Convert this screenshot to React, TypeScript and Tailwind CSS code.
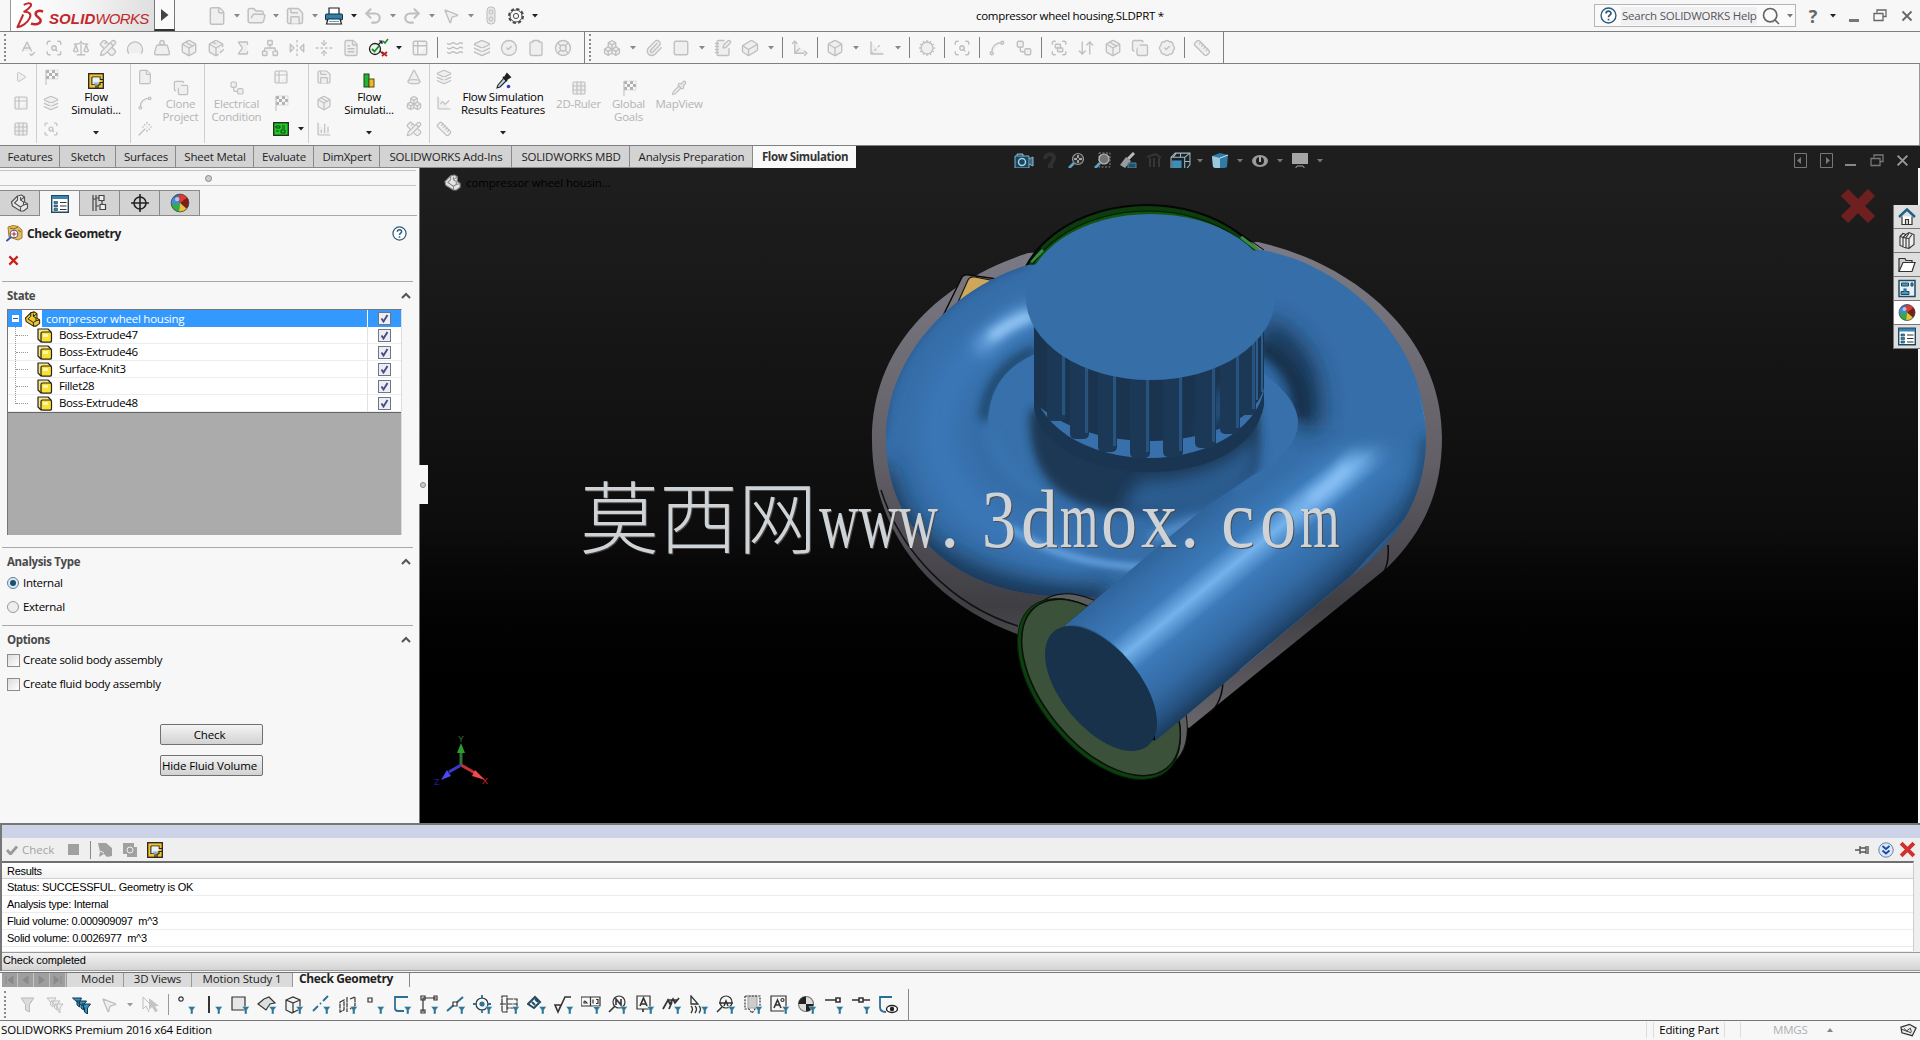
import React from 'react';
import clsx from 'clsx';
import {
  ArrowDownUp, Axis3d, BadgeCheck, Box, Boxes, ChartColumn, ChartLine, CircleCheck, Clipboard, Cog, Cone, Copy,
  Cuboid, FileText, FlipHorizontal2, FolderOpen, Gauge, Grid2x2, Grid3x3, Group, Layers, Move3d, Network,
  NotebookPen, Package, PackageCheck, Paperclip, PencilRuler, Pipette, Play, Redo2, Ruler, Save, Scale, ScanSearch,
  Sigma, Spline, SpellCheck, Table2, Undo2, Wand, Waves, Weight, Workflow, FoldVertical, File, MousePointer2,
  LifeBuoy, Search,
} from 'lucide-react';

type IconType = React.ComponentType<{ className?: string; strokeWidth?: number }>;
type ToolItem = IconType | 'caret' | 'sep' | 'check';

const UI = "font-['Open_Sans',sans-serif]";

function Caret({ className = 'text-[#555]' }: { className?: string }) {
  return (
    <svg viewBox="0 0 6 4" className={clsx('w-[6px] h-[4px] shrink-0', className)}>
      <path d="M0 0h6L3 3.6z" fill="currentColor" />
    </svg>
  );
}

function Grey({ icon: Icon, className = 'w-[18px] h-[18px]' }: { icon: IconType; className?: string }) {
  return <Icon className={clsx('shrink-0 text-[#c0c0c0] fill-[#efefef]', className)} strokeWidth={1.8} />;
}

function CheckerFlag() {
  return (
    <svg viewBox="0 0 16 16" className="w-4 h-4 shrink-0">
      <path d="M3 1v15" stroke="#bbb" />
      <path d="M3 1h3v3H3zM9 1h3v3H9zM6 4h3v3H6zM12 4h3v3h-3zM3 7h3v3H3zM9 7h3v3H9z" fill="#b0b0b0" />
      <path d="M3 1h12v9H3z" fill="none" stroke="#cfcfcf" strokeWidth=".6" />
    </svg>
  );
}

function Grip() {
  return <div className="w-[3px] h-[27px] border-l-2 border-dotted border-[#8a8a8a] shrink-0" />;
}

function CheckEntity() {
  return (
    <svg viewBox="0 0 20 20" className="w-5 h-5 overflow-visible">
      <circle cx="7" cy="11" r="5.5" fill="#e8f5e9" stroke="#222" strokeWidth="1.3" />
      <path d="M4 11l2.500 2.500L11 8" fill="none" stroke="#1c8a2b" strokeWidth="1.800" />
      <path d="M10 7l4-4M11 3h3v3M12 13l3 3" fill="none" stroke="#222" strokeWidth="1.200" />
      <path d="M15 3l2 2 3-4" fill="none" stroke="#1c8a2b" strokeWidth="1.600" />
      <path d="M14 14l5 4M19 14l-5 4" stroke="#c81e1e" strokeWidth="1.800" />
    </svg>
  );
}

const evaluateTools: ToolItem[] = [
  SpellCheck, ScanSearch, Scale, PencilRuler, Gauge, Weight, Package, PackageCheck, Sigma, Network,
  FlipHorizontal2, FoldVertical, FileText, 'check', 'caret', Table2, 'sep', Waves, Layers, CircleCheck, Clipboard, LifeBuoy,
];

const assemblyTools: ToolItem[] = [
  Boxes, 'caret', Paperclip, Grid2x2, 'caret', NotebookPen, Cuboid, 'caret', 'sep', Move3d, 'sep', Box, 'caret',
  Axis3d, 'caret', 'sep', Cog, 'sep', ScanSearch, 'sep', Spline, Workflow, 'sep', Group, ArrowDownUp, Package,
  Copy, BadgeCheck, 'sep', Ruler,
];

function ToolStrip({ items }: { items: ToolItem[] }) {
  return (
    <>
      {items.map((it, i) => {
        if (it === 'sep') return <div key={i} className="w-2 flex justify-center"><div className="w-px h-[21px] bg-[#808080]" /></div>;
        if (it === 'caret') return <div key={i} className="w-[15px] flex justify-center"><Caret className={items[i - 1] === 'check' ? 'text-[#222]' : 'text-[#888]'} /></div>;
        return (
          <div key={i} className="w-[27px] flex justify-center items-center">
            {it === 'check' ? <CheckEntity /> : <Grey icon={it} />}
          </div>
        );
      })}
    </>
  );
}

function TitleBar() {
  const quick: React.ReactNode[] = [
    <Grey icon={File} className="w-[20px] h-[20px]" />,
    <Grey icon={FolderOpen} className="w-[21px] h-[20px]" />,
    <Grey icon={Save} className="w-[20px] h-[20px]" />,
    <svg viewBox="0 0 20 20" className="w-5 h-5">
      <path d="M5 8V2h10v6" fill="#fff" stroke="#222" strokeWidth="1.200" />
      <rect x="1.500" y="8" width="17" height="6" rx="1" fill="#2f80ab" stroke="#14303f" />
      <path d="M4 13h12l1.500 5h-15z" fill="#fff" stroke="#222" strokeWidth="1.200" />
      <path d="M5 15.500h10" stroke="#5aa7c9" />
    </svg>,
    <Undo2 className="w-5 h-5 text-[#c0c0c0]" strokeWidth={2.6} />,
    <Redo2 className="w-5 h-5 text-[#c0c0c0]" strokeWidth={2.6} />,
    <Grey icon={MousePointer2} className="w-[18px] h-[18px]" />,
  ];
  return (
    <div className="h-[31px] flex items-center bg-[#f7f7f7] shrink-0">
      <div className="ml-[10px] w-[144px] h-[31px] border-l border-[#999] bg-linear-to-r from-white via-[#f4f4f4] to-[#dfdfdf] flex items-center">
        <svg viewBox="0 0 30 30" className="ml-[5px] w-[29px] h-[30px] shrink-0">
          <path d="M8 3.500C14 .5 17 2 15 5C13.500 7.500 11.500 8.500 8.500 10.500C13.500 10.500 16.500 12.500 14 17.500C11.500 22.500 6 26 1.500 26.500L7.500 13.500" fill="none" stroke="#c3272b" strokeWidth="2.100" strokeLinejoin="round" />
          <path d="M28 10.500C23.500 8.500 19.500 10.500 20.500 13.500C21.500 16.500 26 17 25.500 20C25 23.500 20 24 15.500 23" fill="none" stroke="#c3272b" strokeWidth="2.600" />
        </svg>
        <div className="ml-[4px] mt-[6px] text-[15px] leading-none italic text-[#c3272b] font-['Liberation_Sans',sans-serif] whitespace-nowrap">
          <span className="font-bold tracking-[0.100px]">SOLID</span>
          <span className="tracking-[-0.700px]">WORKS</span>
        </div>
      </div>
      <div className="w-[21px] h-[31px] border-l border-r border-b-2 border-[#333] border-l-[#777] border-r-[#777] bg-[#fafafa] flex items-center justify-center">
        <svg viewBox="0 0 8 12" className="w-2 h-3"><path d="M0 0l7.500 6L0 12z" fill="#444" /></svg>
      </div>
      <div className="ml-[29px] flex items-center">
        {quick.map((q, i) => (
          <div key={i} className="w-[39px] flex items-center">
            <div className="w-[26px] flex justify-center">{q}</div>
            <div className="w-[13px] flex justify-center"><Caret className={i === 3 ? 'text-[#222]' : 'text-[#888]'} /></div>
          </div>
        ))}
        <svg viewBox="0 0 10 20" className="ml-[9px] w-[10px] h-5">
          <rect x="1" y="1" width="8" height="17" rx="3.500" fill="#e6e6e6" stroke="#bdbdbd" />
          <circle cx="5" cy="6" r="2" fill="none" stroke="#bdbdbd" />
          <circle cx="5" cy="13" r="2" fill="none" stroke="#bdbdbd" />
        </svg>
        <svg viewBox="0 0 18 18" className="ml-[11px] w-[18px] h-[18px]">
          <circle cx="9" cy="9" r="7" fill="none" stroke="#4a4a4a" strokeWidth="2" strokeDasharray="3.300 2.200" />
          <circle cx="9" cy="9" r="6" fill="#f7f7f7" stroke="#4a4a4a" strokeWidth="1" />
          <circle cx="9" cy="9" r="2.600" fill="none" stroke="#4a4a4a" strokeWidth="1" />
        </svg>
        <div className="ml-[7px]"><Caret className="text-[#222]" /></div>
      </div>
      <div className="ml-[438px] w-[187px] text-[11.500px] tracking-[-0.300px] text-black whitespace-nowrap">compressor wheel housing.SLDPRT *</div>
      <div className="ml-auto w-[202px] h-[23px] border border-[#b5b5b5] bg-[#fafafa] flex items-center">
        <QuestionMark className="ml-[5px] w-[17px] h-[17px]" />
        <div className="ml-[4px] px-px w-[136px] bg-[#f0f0f3] text-[11.500px] leading-[18px] tracking-[-0.250px] text-[#555] whitespace-nowrap">Search SOLIDWORKS Help</div>
        <Search className="ml-[4px] w-[20px] h-[20px] text-[#666]" strokeWidth={2} />
        <div className="ml-[6px]"><Caret className="text-[#777]" /></div>
      </div>
      <div className="ml-[12px] w-[10px] text-center text-[18px] leading-none font-bold text-[#666]">?</div>
      <div className="ml-[12px]"><Caret className="text-[#222]" /></div>
      <div className="ml-[13px] mt-[9px] w-[10px] h-[3px] bg-[#777]" />
      <Restore className="ml-[14px] w-[14px] h-[13px] text-[#666]" />
      <Cross className="ml-[14px] mr-[7px] w-[12px] h-[12px] text-[#666]" />
    </div>
  );
}

function QuestionMark({ className }: { className?: string }) {
  return (
    <svg viewBox="0 0 16 16" className={className}>
      <circle cx="8" cy="8" r="7" fill="#fff" stroke="#2b5b78" strokeWidth="1.300" />
      <path d="M5.700 6.200c0-3 4.600-3 4.600-.2 0 1.700-2.300 1.700-2.300 3.600M8 11v1.600" fill="none" stroke="#2b5b78" strokeWidth="1.600" />
    </svg>
  );
}

function Restore({ className }: { className?: string }) {
  return (
    <svg viewBox="0 0 14 13" className={className}>
      <path d="M4 3.500V1h9v6.500h-3M1 4.500h9v7H1z" fill="none" stroke="currentColor" strokeWidth="1.300" />
    </svg>
  );
}

function Cross({ className, width = 1.8 }: { className?: string; width?: number }) {
  return (
    <svg viewBox="0 0 12 12" className={className}>
      <path d="M1.500 1.500l9 9M10.500 1.500l-9 9" stroke="currentColor" strokeWidth={width} />
    </svg>
  );
}

function FlowCube({ className }: { className?: string }) {
  return (
    <svg viewBox="0 0 16 16" className={className}>
      <rect x=".7" y=".7" width="14.600" height="14.600" fill="#f2c230" stroke="#222" strokeWidth="1.300" />
      <path d="M4 4h8v2.500h3M4 4v7.500h4v4M12 12v-2.500h3M10 15v-3h2" fill="none" stroke="#222" strokeWidth="1.200" />
      <path d="M4.600 4.600h7v4.400h-2v2.200h-5z" fill="#e5f3ff" />
      <path d="M5.500 9.500h5L8 13z" fill="#74b5ea" />
    </svg>
  );
}

function IconColumn({ icons, className }: { icons: React.ReactNode[]; className: string }) {
  return (
    <div className={clsx('h-[81px] flex flex-col items-center shrink-0', className)}>
      {icons.map((ic, i) => (
        <div key={i} className="h-[26px] flex items-center justify-center">{ic}</div>
      ))}
    </div>
  );
}

function RibbonSep() {
  return <div className="w-px h-[79px] bg-[#cfcfcf] shrink-0" />;
}

interface BigButtonProps {
  icon: React.ReactNode;
  lines: string[];
  className: string;
  enabled?: boolean;
}

function BigButton({ icon, lines, className, enabled }: BigButtonProps) {
  return (
    <div className={clsx('flex flex-col items-center shrink-0 text-[11.500px] leading-[13px] tracking-[-0.250px] whitespace-nowrap', className, enabled ? 'pt-[7px] text-black' : 'pt-[14px] text-[#b4b4b4]')}>
      <div className="h-[19px] flex items-center">{icon}</div>
      {lines.map((l, i) => (
        <div key={i}>{l}</div>
      ))}
      {enabled && <div className="mt-[15px]"><Caret className="text-[#222]" /></div>}
    </div>
  );
}

function Ribbon() {
  const s = 'w-[16px] h-[16px]';
  return (
    <div className="h-[81px] flex bg-[#f7f7f7] shrink-0 border-r border-[#999]">
      <IconColumn className="ml-[6px] w-[30px]" icons={[<Grey icon={Play} className="w-3 h-3" />, <Grey icon={Table2} className={s} />, <Grey icon={Grid3x3} className={s} />]} />
      <RibbonSep />
      <IconColumn className="w-[27px]" icons={[<CheckerFlag />, <Grey icon={Layers} className={s} />, <Grey icon={ScanSearch} className={s} />]} />
      <BigButton className="w-[64px] mr-[2px]" enabled icon={<FlowCube className="w-4 h-4" />} lines={['Flow', 'Simulati...']} />
      <RibbonSep />
      <IconColumn className="w-[28px]" icons={[<Grey icon={File} className={s} />, <Grey icon={Spline} className={s} />, <Grey icon={Wand} className={s} />]} />
      <BigButton className="w-[43px] mr-[2px]" icon={<Grey icon={Copy} className={s} />} lines={['Clone', 'Project']} />
      <RibbonSep />
      <BigButton className="w-[63px]" icon={<Grey icon={Workflow} className={s} />} lines={['Electrical', 'Condition']} />
      <IconColumn
        className="w-[26px]"
        icons={[
          <Grey icon={Table2} className={s} />,
          <CheckerFlag />,
          <svg viewBox="0 0 16 14" className="w-4 h-[14px]">
            <rect x=".7" y=".7" width="14.600" height="12.600" fill="#25c52c" stroke="#1c2a14" strokeWidth="1.300" />
            <path d="M3 4h4v2H3zM9 4h3M9 6h3M3 9h3M8 8h4v3H8z" fill="none" stroke="#0b4a10" />
          </svg>,
        ]}
      />
      <div className="w-[14px] flex justify-center items-end pb-[14px]"><Caret className="text-[#222]" /></div>
      <RibbonSep />
      <IconColumn className="w-[30px]" icons={[<Grey icon={Save} className={s} />, <Grey icon={Package} className={s} />, <Grey icon={ChartColumn} className={s} />]} />
      <BigButton
        className="w-[60px]"
        enabled
        icon={
          <svg viewBox="0 0 12 16" className="w-3 h-4">
            <rect x="1" y="1" width="5" height="13" fill="#27b03a" stroke="#124a19" />
            <rect x="6" y="6" width="5" height="8" fill="#e8b928" stroke="#5d4a0c" />
          </svg>
        }
        lines={['Flow', 'Simulati...']}
      />
      <IconColumn className="w-[30px]" icons={[<Grey icon={Cone} className={s} />, <Grey icon={Boxes} className={s} />, <Grey icon={PencilRuler} className={s} />]} />
      <RibbonSep />
      <IconColumn className="w-[28px]" icons={[<Grey icon={Layers} className={s} />, <Grey icon={ChartLine} className={s} />, <Grey icon={Ruler} className={s} />]} />
      <BigButton
        className="w-[90px]"
        enabled
        icon={
          <svg viewBox="0 0 16 16" className="w-4 h-4 overflow-visible">
            <path d="M2 15l1-3 6-7 2.500 2.500L5 14z" fill="#b9d9ee" stroke="#222" strokeWidth="1.100" />
            <path d="M8 4l4 4M10 4l2-3 3 3-3 2z" fill="#222" stroke="#222" strokeWidth="1.800" />
            <circle cx="13.500" cy="13.500" r="1.800" fill="#2a3fd0" />
          </svg>
        }
        lines={['Flow Simulation', 'Results Features']}
      />
      <BigButton className="w-[61px]" icon={<Grey icon={Grid3x3} className={s} />} lines={['2D-Ruler']} />
      <BigButton className="w-[39px]" icon={<CheckerFlag />} lines={['Global', 'Goals']} />
      <BigButton className="w-[62px]" icon={<Grey icon={Pipette} className={s} />} lines={['MapView']} />
    </div>
  );
}

const ribbonTabs = [
  { label: 'Features', w: 'w-[60px]' },
  { label: 'Sketch', w: 'w-[56px]' },
  { label: 'Surfaces', w: 'w-[60px]' },
  { label: 'Sheet Metal', w: 'w-[78px]' },
  { label: 'Evaluate', w: 'w-[60px]' },
  { label: 'DimXpert', w: 'w-[66px]' },
  { label: 'SOLIDWORKS Add-Ins', w: 'w-[132px]' },
  { label: 'SOLIDWORKS MBD', w: 'w-[118px]' },
  { label: 'Analysis Preparation', w: 'w-[123px]' },
];

function HeadsUp() {
  const cell = 'w-[26px] flex justify-center items-center';
  const caret = 'w-[14px] flex justify-center items-center';
  return (
    <div className="ml-[155px] mt-[6px] h-[18px] flex">
      <div className={cell}>
        <svg viewBox="0 0 20 18" className="w-5 h-[18px]"><path d="M1 4h14v12H1z" fill="#1d4459" stroke="#7fb4cd" /><path d="M3 4V2h6v2M15 7l4-2v9l-4-2" fill="#3b6b82" stroke="#8fb9cc" /><circle cx="8" cy="10" r="3.500" fill="none" stroke="#9cd1ea" strokeWidth="1.500" /></svg>
      </div>
      <div className={cell}>
        <svg viewBox="0 0 16 18" className="w-4 h-[18px]"><path d="M3 7c0-6 9-6 9-1 0 3-4 4-3 8H6" fill="none" stroke="#303030" strokeWidth="4" /></svg>
      </div>
      <div className={cell}>
        <svg viewBox="0 0 18 18" className="w-[18px] h-[18px]"><circle cx="11" cy="7" r="5.500" fill="#2d3134" stroke="#9a9a9a" strokeWidth="1.200" /><path d="M11 3v8M7 7h8" stroke="#ccc" strokeWidth="1.400" strokeDasharray="3 2" /><path d="M7 11l-5 5" stroke="#5aa3c6" strokeWidth="2.600" /></svg>
      </div>
      <div className={cell}>
        <svg viewBox="0 0 18 18" className="w-[18px] h-[18px]"><rect x="6" y="1" width="11" height="14" fill="none" stroke="#888" strokeDasharray="2 1.500" /><circle cx="11" cy="7" r="5" fill="#737373" stroke="#bbb" strokeWidth="1.200" /><path d="M7 11l-5 5" stroke="#5aa3c6" strokeWidth="2.600" /></svg>
      </div>
      <div className={cell}>
        <svg viewBox="0 0 18 18" className="w-[18px] h-[18px]"><path d="M15 1L9 7" stroke="#bbb" strokeWidth="3" /><path d="M7 5l5 4-6 7-5-3z" fill="#9b9b9b" /><path d="M9 11h8v5H9z" fill="#245069" stroke="#4d87a5" /></svg>
      </div>
      <div className={cell}>
        <svg viewBox="0 0 18 18" className="w-[18px] h-[18px]"><path d="M2 5l9-3 5 4M5 6v9M9 6v9M14 6v9" fill="none" stroke="#363636" strokeWidth="2" /></svg>
      </div>
      <div className={cell}>
        <svg viewBox="0 0 20 18" className="w-[21px] h-[19px]"><path d="M1 5l4-4h14v11l-4 5H1z" fill="#14222b" stroke="#a9b6bd" /><path d="M1 5h13v12M14 5l5-4M10 1v4M14 9h5M6 1L3 5" fill="none" stroke="#a9b6bd" /><path d="M2 8h9v8H2z" fill="#3f8db5" /></svg>
      </div>
      <div className={caret}><Caret className="text-[#777]" /></div>
      <div className={cell}>
        <svg viewBox="0 0 18 18" className="w-[18px] h-[18px]"><path d="M1 4l8-3 8 2-1 12-7 3-7-3z" fill="#2f7ba3" /><path d="M1 4l8 2v12l-7-3z" fill="#9cc8de" /><path d="M9 6l8-3" stroke="#d3e7f1" /></svg>
      </div>
      <div className={caret}><Caret className="text-[#777]" /></div>
      <div className={cell}>
        <svg viewBox="0 0 18 16" className="w-[18px] h-4"><ellipse cx="9" cy="8" rx="8" ry="6" fill="#9b9b9b" /><circle cx="9" cy="8" r="4" fill="#1e1e1e" /><path d="M9 4v5" stroke="#ddd" strokeWidth="1.500" /></svg>
      </div>
      <div className={caret}><Caret className="text-[#777]" /></div>
      <div className={cell}>
        <svg viewBox="0 0 18 18" className="w-[18px] h-[18px]"><path d="M1 1h16v11H1z" fill="#a5a5a5" /><path d="M6 14h6l2 3H4z" fill="#1e1e1e" stroke="#a5a5a5" /></svg>
      </div>
      <div className={caret}><Caret className="text-[#777]" /></div>
    </div>
  );
}

function RibbonTabs() {
  return (
    <div className="h-[23px] flex shrink-0 border-t border-[#808080]">
      {ribbonTabs.map((t) => (
        <div key={t.label} className={clsx('h-[22px] shrink-0 bg-[#d3d3d3] border-r border-b border-[#8a8a8a] flex items-center justify-center pl-px text-[11.500px] tracking-[-0.200px] text-[#1e1e1e] whitespace-nowrap', t.w)}>
          {t.label}
        </div>
      ))}
      <div className="w-[103px] shrink-0 bg-[#f9f9f9] flex items-center justify-center pl-px text-[11.500px] font-bold tracking-[-0.400px] text-[#333] whitespace-nowrap">Flow Simulation</div>
      <div className="flex-1 bg-[#1e1e1e] flex">
        <HeadsUp />
        <div className="ml-auto mr-[11px] mt-[7px] h-[15px] flex items-center gap-[12px] text-[#777]">
          <svg viewBox="0 0 13 15" className="w-[13px] h-[15px] mr-px"><path d="M.5 .5h12v14H.5z" fill="none" stroke="currentColor" /><path d="M7 4v7L3 7.500z" fill="currentColor" /></svg>
          <svg viewBox="0 0 13 15" className="w-[13px] h-[15px]"><path d="M.5 .5h12v14H.5z" fill="none" stroke="currentColor" /><path d="M6 4v7l4-3.500z" fill="currentColor" /></svg>
          <div className="w-[11px] h-[2px] mt-[9px] bg-[#888]" />
          <Restore className="ml-[2px] w-[14px] h-[13px]" />
          <Cross className="w-[13px] h-[13px] text-[#999]" />
        </div>
      </div>
    </div>
  );
}

function Ball({ className }: { className?: string }) {
  return (
    <svg viewBox="0 0 18 18" className={className}>
      <circle cx="9" cy="9" r="8" fill="#3b8de0" />
      <path d="M9 9L3 3.500A8 8 0 0 1 9 1z" fill="#2f6fd0" />
      <path d="M9 9V1a8 8 0 0 1 6.500 4z" fill="#e23b2e" />
      <path d="M9 9L4 4.500 9 1z" fill="#e23b2e" opacity=".5" />
      <path d="M9 9l6.500-5A8 8 0 0 1 15 14z" fill="#7a2016" />
      <path d="M9 9l6 5.300A8 8 0 0 1 8 17z" fill="#e9c22f" />
      <path d="M9 9l-1 8A8 8 0 0 1 1.200 10z" fill="#37a84a" />
      <circle cx="9" cy="9" r="8" fill="none" stroke="#444" strokeWidth=".7" />
      <circle cx="6.500" cy="5.500" r="2" fill="#fff" opacity=".6" />
    </svg>
  );
}

function ListIcon({ className }: { className?: string }) {
  return (
    <svg viewBox="0 0 18 18" className={className}>
      <path d="M.7 .7h16.600v16.600H.7z" fill="#fff" stroke="#1f4a63" strokeWidth="1.400" />
      <path d="M1 1h16v3H1z" fill="#3b85ad" />
      <path d="M3 6.500h3.500v2H3zM3 10h3.500v2H3zM3 13.500h3.500v2H3z" fill="#3b85ad" stroke="#1f4a63" strokeWidth=".7" />
      <path d="M9 7.500h6.500M9 11h6.500M9 14.500h6.500" stroke="#333" strokeWidth="1.200" />
    </svg>
  );
}

function PartIcon({ className, fill = '#e9e9e9' }: { className?: string; fill?: string }) {
  return (
    <svg viewBox="0 0 18 18" className={className}>
      <path d="M1 8l6-6 4-1 3 2v5l3 2v4l-4 3h-3L2 12z" fill={fill} stroke="currentColor" strokeWidth="1.200" strokeLinejoin="round" />
      <path d="M7 2v4l-3 3 6 4 3-2v-3l-3-2V3M10 13v4M10 6l4-3M13 11l4-1" fill="none" stroke="currentColor" strokeWidth="1.100" />
    </svg>
  );
}

function BodyIcon() {
  return (
    <svg viewBox="0 0 16 15" className="w-4 h-[15px] shrink-0">
      <path d="M1 1h10l3 3v10H4l-3-3z" fill="#f6e88a" stroke="#222" strokeWidth="1.200" strokeLinejoin="round" />
      <rect x="4" y="4" width="10.500" height="10" rx="1.500" fill="#fbe232" stroke="#222" strokeWidth="1.200" />
      <path d="M6 6h5v3H6z" fill="#fff7a8" />
    </svg>
  );
}

function CheckedBox() {
  return (
    <div className="w-[13px] h-[13px] border border-[#6f7583] bg-[#eceef4] flex items-center justify-center shrink-0">
      <svg viewBox="0 0 9 9" className="w-[9px] h-[9px]"><path d="M1.500 4.500l2 3L7.500 1" fill="none" stroke="#474d86" strokeWidth="1.900" /></svg>
    </div>
  );
}

const bodies = ['Boss-Extrude47', 'Boss-Extrude46', 'Surface-Knit3', 'Fillet28', 'Boss-Extrude48'];

function SectionHead({ title, className }: { title: string; className?: string }) {
  return (
    <div className={clsx('ml-[2px] mr-[6px] border-t border-[#a8a8a8] pl-[5px] pr-[2px] flex items-center justify-between', className)}>
      <span className="text-[11.500px] font-bold tracking-[-0.350px] text-[#4a4a4a]">{title}</span>
      <svg viewBox="0 0 10 7" className="w-[10px] h-[7px]"><path d="M1 6l4-4 4 4" fill="none" stroke="#555" strokeWidth="2" /></svg>
    </div>
  );
}

function Choice({ label, radio, on }: { label: string; radio?: boolean; on?: boolean }) {
  return (
    <div className="h-6 pl-[7px] flex items-center text-[11.500px] text-black">
      {radio ? (
        <div className={clsx('w-3 h-3 rounded-full border flex items-center justify-center', on ? 'border-[#5d7f99] bg-[#dcebf5]' : 'border-[#999] bg-[#eee]')}>
          {on && <div className="w-[6px] h-[6px] rounded-full bg-[#1b506f]" />}
        </div>
      ) : (
        <div className="w-[13px] h-[13px] border border-[#8c8c8c] bg-linear-to-br from-[#dcdcdc] to-white" />
      )}
      <span className={clsx('tracking-[-0.280px]', radio ? 'ml-[4px]' : 'ml-[3px]')}>{label}</span>
    </div>
  );
}

function PropertyPanel() {
  const tab = 'w-10 h-[26px] border-t border-r border-b border-[#8a8a8a] flex items-center justify-center bg-[#d3d3d3]';
  return (
    <div className="w-[420px] shrink-0 bg-[#f7f7f7] border-r border-[#777] flex flex-col">
      <div className="mt-[2px] mr-[3px] h-[16px] border-t border-b border-[#c4c4c4] flex items-center justify-center">
        <div className="w-[7px] h-[7px] rounded-full border border-[#888] bg-[#ccc]" />
      </div>
      <div className="mt-[4px] flex">
        <div className={tab}><PartIcon className="w-[19px] h-[18px] text-[#555]" /></div>
        <div className="w-10 h-[26px] border-t border-r border-[#8a8a8a] flex items-center justify-center"><ListIcon className="w-[18px] h-[18px]" /></div>
        <div className={tab}>
          <svg viewBox="0 0 16 18" className="w-4 h-[18px]"><path d="M1 1v16M4 1v16M1 5h3M4 4h3M4 12h3M10 7v3" fill="none" stroke="#444" strokeWidth="1.200" /><path d="M7 1.500h5v5H7zM8 10.500h5.500v5H8z" fill="#eee" stroke="#444" strokeWidth="1.200" /></svg>
        </div>
        <div className={tab}>
          <svg viewBox="0 0 18 18" className="w-[18px] h-[18px]"><circle cx="9" cy="9" r="6" fill="none" stroke="#222" strokeWidth="1.600" /><path d="M9 0v18M0 9h18" stroke="#222" strokeWidth="1.600" /></svg>
        </div>
        <div className={tab}><Ball className="w-[20px] h-[20px]" /></div>
        <div className="w-[217px] border-b border-[#a8a8a8]" />
      </div>
      <div className="h-[35px] pl-[6px] pr-[12px] flex items-center">
        <svg viewBox="0 0 17 17" className="w-[17px] h-[17px]">
          <path d="M2 2l5-1.500 5 1L16 5v8l-4 2-9-3z" fill="#e3bd62" stroke="#a47a28" />
          <path d="M4 3l4 1 4-2M12 5l3 2" stroke="#8d6416" fill="none" />
          <circle cx="8" cy="9" r="3.800" fill="#fff" stroke="#5a5a8a" strokeWidth="1.100" />
          <path d="M8 6.500v5M5.500 9h5" stroke="#a8262c" />
          <path d="M5 12l-4.500 4" stroke="#3355aa" strokeWidth="1.800" />
        </svg>
        <span className="ml-[4px] text-[12px] font-bold tracking-[-0.350px] text-[#222]">Check Geometry</span>
        <QuestionMark className="ml-auto w-[15px] h-[15px]" />
      </div>
      <div className="h-[30px] pl-[8px] pt-[4px]"><Cross className="w-[11px] h-[11px] text-[#c8201c]" width={2.4} /></div>
      <SectionHead title="State" className="h-[28px]" />
      <div className="ml-[7px] w-[395px] h-[226px] bg-[#ababab] border-t border-l border-[#777] border-r border-r-[#ddd]">
        <div className="h-[17px] bg-[#3399ff] flex items-center text-[11.500px] text-white">
          <div className="ml-[4px] w-[7px] h-[7px] bg-white flex items-center justify-center"><div className="w-[5px] h-px bg-[#1b5faa]" /></div>
          <div className="ml-[3px] w-[20px] h-[17px] bg-white flex items-center justify-center"><PartIcon className="w-[17px] h-[16px] text-[#2c2200]" fill="#e8c93a" /></div>
          <span className="ml-[4px] tracking-[-0.250px]">compressor wheel housing</span>
          <div className="ml-auto w-[34px] h-[17px] border-l border-white flex items-center justify-center"><CheckedBox /></div>
        </div>
        <div className="relative">
          <div className="absolute left-[7px] top-0 w-px h-[77px] border-l border-dotted border-[#999]" />
          {bodies.map((b) => (
            <div key={b} className="h-[17px] bg-white border-b border-[#ededed] flex items-center text-[11.500px] tracking-[-0.380px] text-black">
              <div className="ml-[8px] w-[12px] border-t border-dotted border-[#999]" />
              <div className="ml-[9px] flex"><BodyIcon /></div>
              <span className="ml-[6px] leading-[16px]">{b}</span>
              <div className="ml-auto w-[34px] h-[17px] border-l border-[#e2e2e2] flex items-center justify-center"><CheckedBox /></div>
            </div>
          ))}
          <div className="h-px bg-[#666]" />
        </div>
      </div>
      <SectionHead title="Analysis Type" className="mt-[12px] h-[28px]" />
      <div className="-mt-[4px]">
        <Choice label="Internal" radio on />
        <Choice label="External" radio />
      </div>
      <SectionHead title="Options" className="mt-[6px] h-[28px]" />
      <div className="-mt-[5px]">
        <Choice label="Create solid body assembly" />
        <Choice label="Create fluid body assembly" />
      </div>
      <div className="mt-[28px] ml-[160px] w-[103px] flex flex-col gap-[10px]">
        {['Check', 'Hide Fluid Volume'].map((l) => (
          <button key={l} className="h-[21px] pr-[4px] rounded-[2px] border border-[#707070] bg-linear-to-b from-[#f4f4f4] to-[#d2d2d2] text-[11.500px] leading-[18px] tracking-[-0.150px] text-black whitespace-nowrap">{l}</button>
        ))}
      </div>
    </div>
  );
}

const TORUS =
  'M1028 265C960 285 886 350 886 440C886 520 945 590 1050 596C1075 598 1085 598 1097 597L1065 625C1100 630 1160 690 1155 740L1189 713L1350 577C1400 540 1426 495 1426 437C1426 340 1345 265 1262 250Z';
const PIPE = 'M1197 513L1063 627C1095 615 1158 670 1155 741L1350 577C1400 540 1426 495 1426 437C1426 400 1410 375 1400 360L1299 430C1290 452 1270 465 1250 477Z';

// x, width, bottom of each impeller blade
const blades = [
  [1047, 19, 421], [1070, 19, 439], [1098, 19, 452], [1130, 20, 458],
  [1163, 20, 457], [1195, 21, 448], [1220, 20, 434], [1239, 17, 415],
];

// glyphs with the matrix that narrows each of them to a 40px cell
const domain: [string, string][] = [
  ['www', 'matrix(0.67 0 0 1 819 547)'],
  ['.', 'matrix(0.95 0 0 1 940 547)'],
  ['3', 'matrix(0.83 0 0 1 982 547)'],
  ['d', 'matrix(0.9 0 0 1 1021 547)'],
  ['m', 'matrix(0.6 0 0 1 1060 547)'],
  ['o', 'matrix(0.88 0 0 1 1101 547)'],
  ['x', 'matrix(0.88 0 0 1 1141 547)'],
  ['.', 'matrix(0.95 0 0 1 1180 547)'],
  ['c', 'matrix(0.92 0 0 1 1221 547)'],
  ['o', 'matrix(0.88 0 0 1 1260 547)'],
  ['m', 'matrix(0.62 0 0 1 1300 547)'],
];

function Blur({ id, r }: { id: string; r: number }) {
  return (
    <filter id={id} filterUnits="userSpaceOnUse" x="800" y="180" width="720" height="640">
      <feGaussianBlur stdDeviation={r} />
    </filter>
  );
}

function Model() {
  return (
    <svg viewBox="420 168 1498 655" className="absolute inset-0 w-[1498px] h-[655px] overflow-visible">
      <defs>
        <clipPath id="torus"><path d={TORUS} /></clipPath>
        <clipPath id="pipe"><path d={PIPE} /></clipPath>
        <clipPath id="well"><path d="M960 300H1340V425H1299C1293 452 1272 465 1250 477L1197 513L1140 561H960Z" /></clipPath>
        <clipPath id="drum"><path d="M1034 300V395C1034 437 1084 472 1149 472C1214 472 1264 437 1264 395V300Z" /></clipPath>
        <clipPath id="flange"><path d="M1000 580H1085L1105 591L1065 625L1100 700L1154 741L1189 712V800H1000Z" /></clipPath>
        <Blur id="b3" r={3} />
        <Blur id="b5" r={5} />
        <Blur id="b8" r={8} />
        <Blur id="b12" r={12} />
        <linearGradient id="shell" x1="0" y1="242" x2="0" y2="728" gradientUnits="userSpaceOnUse">
          <stop offset="0" stopColor="#7c7a84" />
          <stop offset=".45" stopColor="#625f66" />
          <stop offset=".75" stopColor="#3f3e43" />
          <stop offset="1" stopColor="#69666c" />
        </linearGradient>
        <linearGradient id="tube" x1="1130" y1="568" x2="1224" y2="682" gradientUnits="userSpaceOnUse">
          <stop offset="0" stopColor="#2f639a" />
          <stop offset=".1" stopColor="#346ca6" />
          <stop offset=".3" stopColor="#3c7aba" />
          <stop offset=".43" stopColor="#74b2ec" />
          <stop offset=".56" stopColor="#3c7aba" />
          <stop offset=".78" stopColor="#3269a2" />
          <stop offset=".91" stopColor="#275383" />
          <stop offset="1" stopColor="#1c3e60" />
        </linearGradient>
      </defs>

      {/* housing shell */}
      <path d="M1028 253C940 282 872 345 872 440C872 530 930 602 1017 634L1189 728L1388 567C1425 530 1442 490 1442 437C1442 340 1360 265 1258 242Z" fill="url(#shell)" />
      <path d="M881 490C900 550 950 605 1018 626" fill="none" stroke="#111" strokeWidth="1.500" />
      <path d="M1388 545C1389 558 1388 566 1383 573M1223 682C1222 700 1216 710 1205 716" fill="none" stroke="#0a0a0a" strokeWidth="1.500" />
      <path d="M939 324L962 277Q964 274 969 275L997 279L965 310Z" fill="#77747a" stroke="#0a0a0a" strokeWidth="1.500" />
      <path d="M955 309L968 280Q970 276 975 277L995 281Z" fill="#cfa75a" stroke="#1a1a1a" strokeWidth="1.200" />

      {/* inlet ring behind the cap */}
      <ellipse cx="1147" cy="302" rx="130" ry="97" fill="#0c3d0e" stroke="#050505" strokeWidth="2" />
      <ellipse cx="1148" cy="303" rx="127" ry="92" fill="#11530f" stroke="#051a05" strokeWidth="1.200" />
      <path d="M1031 262L1043 250M1241 237L1258 250" stroke="#3a8a40" strokeWidth="3" />
      <path d="M1027 265L1041 248M1241 234L1264 250" stroke="#050505" strokeWidth="1" />

      {/* scroll volume */}
      <path d={TORUS} fill="#366ea9" />
      <g clipPath="url(#torus)">
        <path d="M872 470C886 548 950 606 1110 606" fill="none" stroke="#18334f" strokeWidth="40" filter="url(#b12)" />
        <path d="M1028 262C956 284 884 345 882 440" fill="none" stroke="#28558a" strokeWidth="8" filter="url(#b5)" />
        <path d="M1040 314C975 340 932 385 938 445C947 505 1010 546 1090 556" fill="none" stroke="#3a78ba" strokeWidth="30" filter="url(#b12)" />
        <path d="M978 350C995 332 1012 320 1034 312" fill="none" stroke="#74b0ea" strokeWidth="13" filter="url(#b8)" />
        <path d="M990 338C1005 326 1020 319 1034 315" fill="none" stroke="#9ccdf8" strokeWidth="9" filter="url(#b5)" />
        <path d="M1010 528C1050 555 1096 566 1145 567" fill="none" stroke="#6ba8e4" strokeWidth="6" filter="url(#b3)" />
        <path d="M1150 537C1170 532 1185 526 1196 516" fill="none" stroke="#6ba8e4" strokeWidth="6" filter="url(#b5)" />
        <path d="M1036 350C1000 365 986 390 984 420" fill="none" stroke="#1e4468" strokeWidth="10" filter="url(#b5)" />
      </g>

      {/* discharge pipe */}
      <g clipPath="url(#pipe)">
        <path d="M1302 425L1063 627L1155 741L1350 577L1440 480V340Z" fill="url(#tube)" />
        <path d="M1260 330H1450V440C1420 480 1395 465 1360 450C1330 440 1300 455 1275 475L1225 500Z" fill="#366ea9" filter="url(#b12)" />
        <path d="M1235 488L1290 445" stroke="#366ea9" strokeWidth="16" filter="url(#b5)" />
        <path d="M1290 517C1325 492 1342 478 1358 456" fill="none" stroke="#74b0ea" strokeWidth="13" filter="url(#b8)" />
        <path d="M1310 500C1325 490 1338 478 1348 466" fill="none" stroke="#8ec4f5" strokeWidth="8" filter="url(#b5)" />
        <path d="M1431 437C1429 500 1400 549 1354 586" fill="none" stroke="#1d4064" strokeWidth="16" filter="url(#b8)" />
      </g>
      <g clipPath="url(#torus)">
        <path d="M1262 330C1296 348 1312 375 1306 428" fill="none" stroke="#152f49" strokeWidth="26" filter="url(#b12)" />
        <path d="M1260 345C1290 362 1304 385 1302 418" fill="none" stroke="#17324d" strokeWidth="16" filter="url(#b5)" />
      </g>

      {/* ledge and hub */}
      <g clipPath="url(#well)">
        <path d="M1040 352C1005 365 988 390 988 425C992 445 1000 458 1020 470L1260 476C1285 460 1299 440 1298 420C1296 400 1280 386 1262 372Z" fill="#3770ab" />
        <path d="M990 430C996 455 1010 475 1040 492" fill="none" stroke="#3973b0" strokeWidth="12" filter="url(#b5)" />
        <path d="M1030 410C1026 470 1056 510 1126 512C1180 514 1235 492 1256 470C1262 440 1260 420 1256 400Z" fill="#1a3754" filter="url(#b5)" />
        <path d="M1140 480C1190 480 1234 464 1254 436C1266 466 1244 500 1204 512C1170 520 1140 518 1120 508Z" fill="#2b5c8f" filter="url(#b8)" />
      </g>

      {/* impeller drum */}
      <path d="M1034 390V408C1040 445 1090 472 1149 472C1208 472 1256 448 1264 405V390Z" fill="#1a3551" />
      <g clipPath="url(#drum)">
        <ellipse cx="1149" cy="380" rx="116" ry="78" fill="#3770ab" />
        <path d="M1034 300H1264V388C1256 420 1205 441 1149 441C1100 441 1058 425 1034 402Z" fill="#1a344f" />
        <path d="M1195 432C1215 426 1235 413 1240 400V374L1218 390Z" fill="#234d77" filter="url(#b5)" />
        {blades.map(([x, w, b]) => (
          <g key={x}>
            <rect x={x} y="340" width={w} height={b - 340} rx="5" fill="#1b3957" />
            <rect x={x + w - 4} y="340" width="3" height={b - 346} fill="#27547f" />
          </g>
        ))}
        <path d="M1257 340V400M1262 330V392" stroke="#2b5c8e" strokeWidth="2" />
      </g>
      <ellipse cx="1150.500" cy="297" rx="124.700" ry="83" fill="#366fa8" />

      {/* outlet flange */}
      <g clipPath="url(#flange)">
        <ellipse cx="1108" cy="682" rx="104" ry="57" transform="rotate(50.600 1108 682)" fill="#5d5d5d" stroke="#0a0a0a" />
        <ellipse cx="1099" cy="689" rx="106.500" ry="59" transform="rotate(50.600 1099 689)" fill="#0d400f" stroke="#082208" />
        <ellipse cx="1101" cy="687.500" rx="104" ry="57" transform="rotate(50.600 1101 687.500)" fill="#3c5139" stroke="#0a0f0a" strokeWidth="1.500" />
      </g>
      <path d="M1065 626C1085 618 1130 640 1148 680C1156 700 1160 725 1154 742L1189 713L1240 670L1120 580Z" fill="url(#tube)" />
      <ellipse cx="1101" cy="688.500" rx="74" ry="39.500" transform="rotate(50.600 1101 688.500)" fill="#19324c" />

      {/* triad */}
      <path d="M461 765V750" stroke="#2b7a2b" strokeWidth="3" />
      <path d="M457 753L461 743L465 753Z" fill="#2f9a2f" />
      <path d="M461 765L475 773" stroke="#c93030" strokeWidth="3" />
      <path d="M475 770L485 780L472 776Z" fill="#f04a4a" />
      <path d="M461 765L449 772" stroke="#3a3ad0" strokeWidth="3" />
      <path d="M451 776L441 780L447 770Z" fill="#4a4af5" />
      <g className="font-['Liberation_Sans',sans-serif] text-[9px]">
        <text x="458" y="742" fill="#2f7a2f">Y</text>
        <text x="482" y="784" fill="#d02525">X</text>
        <text x="434" y="785" fill="#1d1da0">Z</text>
      </g>

      {/* watermark */}
      <g fill="#cdd3d6" className="drop-shadow-[1.5px_1.5px_0px_rgba(80,72,68,0.95)]">
        <text x="580" y="548" className="font-['Noto_Sans_CJK_SC',sans-serif] font-light text-[79px]">莫西网</text>
        {domain.map(([ch, m]) => (
          <text key={m} transform={m} className="font-['Liberation_Serif',serif] text-[82px]">{ch}</text>
        ))}
      </g>
    </svg>
  );
}

function TaskPane() {
  const s = 'w-[18px] h-[19px]';
  const items = [
    <svg viewBox="0 0 18 18" className={s}><path d="M4 9v8h10V9M7.500 17v-5h3v5" fill="#fff" stroke="#333" strokeWidth="1.200" /><path d="M1 9.500L9 2l8 7.500" fill="none" stroke="#1f6186" strokeWidth="2.400" /></svg>,
    <svg viewBox="0 0 18 18" className={s}><path d="M2 5l3-3 3 1 3-2 5 2v10l-5 4-4-1-5-2zM2 5l3 1v10M5 6l3-3M8 6l3-4M8 6v11M11 7l3-4M11 7v10M5 6l6 1" fill="#eee" stroke="#333" strokeWidth="1.100" /></svg>,
    <svg viewBox="0 0 18 18" className={s}><path d="M1 16V3h6l1 2h6v2" fill="#ccc" stroke="#333" strokeWidth="1.200" /><path d="M1 16L5 7h12l-3 9z" fill="#fff" stroke="#333" strokeWidth="1.200" /></svg>,
    <svg viewBox="0 0 18 18" className={s}><path d="M1 1h16v16H1z" fill="#e8f1f5" stroke="#1f4a63" strokeWidth="1.500" /><path d="M3.500 3.500h7v3h-7zM13 3.500h2v3h-2zM6 9v3h-3v3h8v-3H8V9" fill="#4d97bd" stroke="#1f4a63" /></svg>,
    <Ball className={s} />,
    <ListIcon className={s} />,
  ];
  return (
    <div className="absolute right-[-2px] top-[37px] w-[27px] bg-[#dedede] border-l border-[#777]">
      {items.map((ic, i) => (
        <div key={i} className={clsx('h-6 flex items-center justify-center border-b border-[#777]', i === 4 && 'bg-white')}>{ic}</div>
      ))}
    </div>
  );
}

function Viewport() {
  return (
    <div className="relative w-[1498px] h-[655px] bg-linear-to-b from-[#1e1e1e] from-[2%] via-[#0d0d0d] via-[55%] to-black to-[90%]">
      <Model />
      <div className="absolute left-[24px] top-[6px] flex items-center">
        <PartIcon className="w-[17px] h-[17px] text-[#888]" fill="#e6e6e6" />
        <span className="ml-[5px] text-[11.500px] tracking-[-0.100px] text-black whitespace-nowrap">compressor wheel housin...</span>
      </div>
      <Cross className="absolute left-[1420px] top-[20px] w-[36px] h-[36px] text-[#6e1f20]" width={3.4} />
      <div className="absolute left-[-2px] top-[297px] w-[10px] h-[39px] bg-[#f7f7f7] flex items-center justify-center">
        <div className="w-[6px] h-[6px] rounded-full border border-[#888] bg-[#ccc]" />
      </div>
      <TaskPane />
    </div>
  );
}

const results = [
  'Status: SUCCESSFUL. Geometry is OK',
  'Analysis type: Internal',
  'Fluid volume: 0.000909097  m^3',
  'Solid volume: 0.0026977  m^3',
];

function ResultsPanel() {
  return (
    <div className="shrink-0 border-l-2 border-[#777] bg-[#efefef] font-['Liberation_Sans',sans-serif]">
      <div className="h-[15px] border-t-2 border-[#777] bg-[#ccd3e6]" />
      <div className="h-[23px] flex items-center">
        <svg viewBox="0 0 12 10" className="ml-[4px] w-3 h-[10px]"><path d="M1 5l3.500 4L11 1.500" fill="none" stroke="#999" strokeWidth="2.800" /></svg>
        <span className={clsx('ml-[4px] w-[34px] text-[11.500px] text-[#a3a3a3]', UI)}>Check</span>
        <div className="ml-[12px] w-[11px] h-[11px] bg-[#a0a0a0]" />
        <div className="ml-[11px] w-px h-[18px] bg-[#888]" />
        <svg viewBox="0 0 16 16" className="ml-[6px] w-4 h-4"><path d="M1 1h8l6 5v8l-5 1-3-3-5 3 1-5z" fill="#a0a0a0" /><path d="M3 9l4 2" stroke="#eee" /></svg>
        <svg viewBox="0 0 16 16" className="ml-[9px] w-4 h-4"><path d="M1 1h11v4h3v10H5v-3H1z" fill="#a0a0a0" /><circle cx="8" cy="8" r="3" fill="none" stroke="#eee" /></svg>
        <FlowCube className="ml-[9px] w-4 h-4" />
        <svg viewBox="0 0 14 10" className="ml-auto w-[14px] h-[10px]"><path d="M0 5h5M5 1v8M5 3h6M5 7h6M11 1v8M13 1v8" fill="none" stroke="#555" strokeWidth="1.400" /></svg>
        <svg viewBox="0 0 16 16" className="ml-[9px] w-4 h-4"><circle cx="8" cy="8" r="7.200" fill="#dce8f7" stroke="#6880a3" /><path d="M4.500 4l3.500 3 3.500-3M4.500 8.500l3.500 3 3.500-3" fill="none" stroke="#1c47a0" strokeWidth="1.800" /></svg>
        <Cross className="ml-[5px] mr-[4px] w-[17px] h-[17px] text-[#d2302f]" width={2.8} />
      </div>
      <div className="mr-[6px] h-[90px] border-t-2 border-r border-[#6f6f6f] border-r-[#ccc] bg-white text-[11px] tracking-[-0.280px] text-black">
        <div className="h-[16px] pl-[5px] leading-[17px] border-b border-[#cfcfcf] bg-linear-to-b from-white to-[#f2f2f2]">Results</div>
        {results.map((r) => (
          <div key={r} className="h-[17px] pl-[5px] leading-[17px] border-b border-[#ececec] whitespace-pre">{r}</div>
        ))}
      </div>
      <div className="mt-[1px] h-[19px] border-t border-b border-[#9a9a9a] bg-linear-to-b from-[#f3f3f3] to-[#d3d3d3] pl-px text-[11px] leading-[15px] tracking-[-0.150px] text-black">Check completed</div>
    </div>
  );
}

const glyphs: React.ReactNode[] = [
  <circle cx="5" cy="4" r="2.200" />,
  <path d="M6 1v17" strokeWidth="2" />,
  <path d="M2 2h13v13H2z" fill="#e6e6e6" />,
  <path d="M1 9l6-5 5-2 6 6-5 1-4 6z" fill="#ddd" />,
  <path d="M2 5l7-3 7 3v9l-8 4-6-3zM2 5l7 3v9M9 8l7-3" fill="#f3f3f3" />,
  <path d="M2 16l5-5M9 9l1-1M12 6l5-5" stroke="#2c6f94" strokeWidth="1.800" />,
  <path d="M2 7l4-2v10l-4 2zM9 2v15M12 4l5-2v9l-5 3" strokeDasharray="5 .6" />,
  <path d="M3 3h4v4H3z" />,
  <path d="M16 2H3v11q0 3 3 3h6" stroke="#2c6f94" strokeWidth="1.800" />,
  <path d="M4 17V3h13M2 15h4v3H2zM2 1h4v4H2zM15 1h3v4h-3z" />,
  <><path d="M1 16L17 2" stroke="#2c6f94" strokeWidth="2" /><path d="M7 7h4v4H7z" fill="#fff" /></>,
  <><circle cx="9" cy="9" r="6" /><circle cx="9" cy="9" r="2" fill="#2c6f94" stroke="#2c6f94" /><path d="M9 0v4M9 14v4M0 9h4M14 9h4" stroke="#2c6f94" strokeWidth="1.800" /></>,
  <path d="M2 1h5v16H2zM7 4h10v9H7M0 9h17" strokeDasharray="6 .6" />,
  <path d="M1 9l7-7 5 5-6 6zM5 7l3 3M8 4l3 3" strokeWidth="2" stroke="#234b61" />,
  <path d="M1 10h6l-3 7zM4 17L11 2h6" strokeWidth="1.600" />,
  <><path d="M0 2h19v9H0zM9.500 2v9M3 8q0-4 3 0z" /><path d="M12 4.500v4M15 4.500h2v4h-2" /></>,
  <><circle cx="11" cy="7" r="6" /><path d="M8 10V4l5 6V4M7 11l-6 6" strokeWidth="1.600" /></>,
  <><path d="M2 1h13v13H2z" /><path d="M5 11l3.500-8 3.500 8M6 9h5M8 14v3" strokeWidth="1.700" /></>,
  <path d="M1 14l5-9 2 4 3-5 2 4 4-5M5 5h10M7 14l3-7" strokeWidth="1.700" />,
  <path d="M2 1v8h7zM2 11q3 3 0 7M6 11q3 3 0 7M10 11q3 3 0 7" strokeWidth="1.300" />,
  <><circle cx="10" cy="7" r="6" /><path d="M3 8h14M6 12l-5 5M8 11l2-5 2 5" strokeWidth="1.500" /></>,
  <><path d="M5 1h9v12H5z" fill="#ccc" stroke="#aaa" /><path d="M2 1v13h4l3 4 3-4h5V1z" strokeDasharray="2 1.200" /></>,
  <><path d="M1 1h15v15H1z" /><path d="M4 13l3.500-8 3.500 8M5 10h5" strokeWidth="1.600" /><circle cx="12.500" cy="5" r="1.500" /></>,
  <><circle cx="9" cy="9" r="7.500" fill="#ddd" stroke="#777" /><path d="M9 9V1.500A7.500 7.500 0 0 0 1.500 9zM9 9v7.500A7.500 7.500 0 0 0 16.500 9z" fill="#222" stroke="none" /></>,
  <path d="M1 5h11M12 3h4v4h-4z" strokeWidth="1.600" />,
  <path d="M1 5h7M12 5h7M8 3h4v4H8z" strokeWidth="1.600" />,
];

function FilterToolbar() {
  return (
    <div className="h-[33px] pt-px flex items-center shrink-0 border-b border-[#777] bg-[#f7f7f7]">
      <div className="ml-[4px]"><Grip /></div>
      <div className="ml-[7px] w-[27px] flex justify-center">
        <svg viewBox="0 0 14 16" className="w-[15px] h-4"><path d="M.7 1h12.600L9 7.500V15l-4-2V7.500z" fill="#dcdcdc" stroke="#b9b9b9" /></svg>
      </div>
      <div className="w-[27px] flex justify-center">
        <svg viewBox="0 0 18 18" className="w-[18px] h-[18px]"><path d="M1 2h9L7 6v5L4.500 9V6zM5 5h9l-3 4v5l-2.500-2V9zM9 8h8l-3 4v5l-2-2v-3z" fill="#f0f0f0" stroke="#bdbdbd" /></svg>
      </div>
      <div className="w-[27px] flex justify-center">
        <svg viewBox="0 0 18 18" className="w-[19px] h-[18px]"><path d="M0 2h9L7 6v5L4.500 9V6zM4 5h10l-3 4v5l-2.500-2V9zM9 8h9l-3 4v6l-3-2v-4z" fill="#2f93c4" stroke="#17384a" /></svg>
      </div>
      <div className="w-[27px] flex justify-center"><Grey icon={MousePointer2} /></div>
      <div className="w-[15px] flex justify-center"><Caret className="text-[#999]" /></div>
      <div className="w-[27px] flex justify-center">
        <svg viewBox="0 0 18 18" className="w-[18px] h-[18px]"><path d="M1 1v12l3-3 3 6M1 1l8 8" fill="none" stroke="#bdbdbd" /><path d="M7 2v12l3-3 3 5 3-1-3-5h4z" fill="#c4c4c4" /></svg>
      </div>
      <div className="w-[8px] flex justify-center"><div className="w-px h-[21px] bg-[#999]" /></div>
      {glyphs.map((g, i) => (
        <div key={i} className="w-[27px] flex justify-center">
          <svg viewBox="0 0 20 20" className="w-5 h-5" fill="none" stroke="#333" strokeWidth="1.200">
            {g}
            <path d="M12 11.500h7.500l-2.500 3.500v4h-2.500v-4z" fill="#2f7699" stroke="#f7f7f7" strokeWidth=".4" />
          </svg>
        </div>
      ))}
      <div className="w-[27px] flex justify-center">
        <svg viewBox="0 0 20 20" className="w-5 h-5" fill="none">
          <path d="M14 2H2v10q0 5 6 5" stroke="#2c6f94" strokeWidth="1.800" />
          <ellipse cx="14" cy="14" rx="5.500" ry="3.500" fill="#fff" stroke="#222" strokeWidth="1.400" />
          <circle cx="14" cy="14" r="2.200" fill="#222" />
        </svg>
      </div>
      <div className="ml-[7px] w-px h-[32px] bg-[#888]" />
    </div>
  );
}

function BottomTabs() {
  const tab = 'h-[14px] bg-[#dadada] border-r border-[#999] flex items-center justify-center pb-[3px] text-[11.500px] tracking-[-0.150px] text-[#222] whitespace-nowrap leading-none';
  return (
    <div className="mt-px h-[16px] flex shrink-0 border-t border-[#777] bg-[#f7f7f7]">
      <div className="ml-[2px] w-[65px] h-[14px] bg-[#9f9f9f] flex">
        {['M4 1v8M11 1L6 5l5 4z', 'M10 1L5 5l5 4z', 'M5 1l5 4-5 4z', 'M4 1l5 4-5 4zM11 1v8'].map((d) => (
          <svg key={d} viewBox="0 0 15 10" className="w-[16px] h-[14px] border-r border-[#c6c6c6]"><path d={d} fill="#8a8a8a" stroke="#8a8a8a" /></svg>
        ))}
      </div>
      <div className={clsx(tab, 'w-[57px] pl-[5px]')}>Model</div>
      <div className={clsx(tab, 'w-[68px]')}>3D Views</div>
      <div className={clsx(tab, 'w-[101px]')}>Motion Study 1</div>
      <div className="w-[117px] h-[14px] pl-[6px] pb-[3px] border-r border-[#888] flex items-center text-[12px] font-bold tracking-[-0.350px] text-[#222] whitespace-nowrap leading-none">Check Geometry</div>
    </div>
  );
}

function StatusBar() {
  return (
    <div className="h-[19px] pb-px flex items-center shrink-0 bg-[#f7f7f7] text-[11.500px] tracking-[-0.170px] text-black">
      <div className="ml-px">SOLIDWORKS Premium 2016 x64 Edition</div>
      <div className="ml-auto w-[8px] h-[16px] border-l border-r border-[#ddd]" />
      <div className="w-[71px] h-[16px] border-r border-[#ddd] flex items-center justify-center">Editing Part</div>
      <div className="ml-[15px] w-[33px] h-[16px] border-l border-[#ddd]" />
      <div className="w-[38px] text-[#b0b0b0]">MMGS</div>
      <svg viewBox="0 0 6 4" className="ml-[16px] w-[6px] h-[4px]"><path d="M0 4h6L3 0z" fill="#888" /></svg>
      <svg viewBox="0 0 18 14" className="ml-[67px] mr-[3px] w-[17px] h-[14px]">
        <path d="M1 4l9-3 7 4-4 8-11-3z" fill="#eee" stroke="#333" strokeWidth="1.300" />
        <path d="M4 5l3 3 4-3 1 4M1 6l11 4" fill="none" stroke="#333" />
      </svg>
    </div>
  );
}

export default function App() {
  return (
    <div className={clsx('w-[1920px] h-[1040px] overflow-hidden flex flex-col bg-[#f7f7f7]', UI)}>
      <TitleBar />
      <div className="h-[33px] flex items-center shrink-0 border-t border-b border-[#808080] bg-[#f7f7f7]">
        <div className="ml-[4px]"><Grip /></div>
        <div className="ml-[6px] flex items-center"><ToolStrip items={evaluateTools} /></div>
        <div className="ml-[8px] w-px h-[31px] bg-[#808080]" />
        <div className="ml-[4px]"><Grip /></div>
        <div className="ml-[6px] flex items-center"><ToolStrip items={assemblyTools} /></div>
        <div className="ml-[8px] w-px h-[31px] bg-[#808080]" />
      </div>
      <Ribbon />
      <RibbonTabs />
      <div className="h-[655px] flex shrink-0">
        <PropertyPanel />
        <Viewport />
      </div>
      <ResultsPanel />
      <BottomTabs />
      <FilterToolbar />
      <StatusBar />
    </div>
  );
}
